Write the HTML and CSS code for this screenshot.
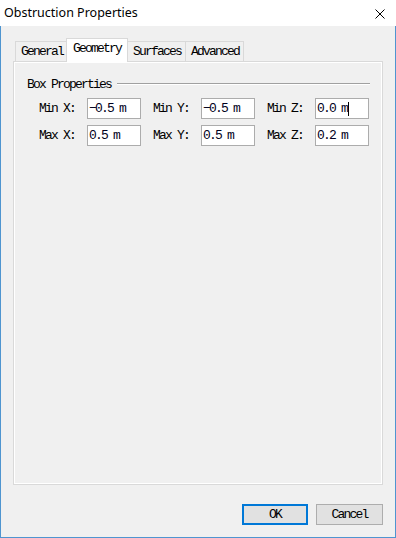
FILE: index.html
```html
<!DOCTYPE html>
<html>
<head>
<meta charset="utf-8">
<link rel="stylesheet" href="styles.css">
</head>
<body>
<div class="window">
  <div class="titlebar">
    <span class="title">Obstruction Properties</span>
    <svg class="close" width="10" height="10" viewBox="0 0 10 10"><path d="M0.5 0.5 L9.5 9.5 M9.5 0.5 L0.5 9.5" stroke="#000" stroke-width="1" fill="none"/></svg>
  </div>
  <div class="body">
    <div class="tabs">
      <div class="tab">General</div>
      <div class="tab selected">Geometry</div>
      <div class="tab">Surfaces</div>
      <div class="tab">Advanced</div>
    </div>
    <div class="panel">
      <div class="group-head">
        <span class="group-label">Box Properties</span>
        <span class="group-line"></span>
      </div>
      <div class="row">
        <span class="lbl">Min X:</span><span class="field">&minus;0.5 m</span>
        <span class="lbl">Min Y:</span><span class="field">&minus;0.5 m</span>
        <span class="lbl">Min Z:</span><span class="field">0.0 m<span class="caret"></span></span>
      </div>
      <div class="row">
        <span class="lbl">Max X:</span><span class="field">0.5 m</span>
        <span class="lbl">Max Y:</span><span class="field">0.5 m</span>
        <span class="lbl">Max Z:</span><span class="field">0.2 m</span>
      </div>
    </div>
    <div class="buttons">
      <div class="btn default">OK</div>
      <div class="btn">Cancel</div>
    </div>
  </div>
</div>
</body>
</html>
```
FILE: styles.css
```css
html, body {
  margin: 0;
  padding: 0;
  background: #f0f0f0;
}
.window {
  width: 396px;
  height: 538px;
  display: flex;
  flex-direction: column;
}
.titlebar {
  height: 26px;
  background: #fff;
  display: flex;
  align-items: center;
  justify-content: space-between;
  padding: 0 11px 0 4px;
  box-sizing: border-box;
}
.title {
  font-family: "Noto Sans", sans-serif;
  font-size: 12.5px;
  color: #000;
  line-height: 26px;
}
.close {
  display: block;
  margin-top: 1px;
}
.body {
  flex: 1;
  border: 1px solid #4f95d0;
  border-top: none;
  padding: 13px 12px 12px 12px;
  display: flex;
  flex-direction: column;
  font-family: "Liberation Mono", monospace;
  font-size: 13px;
  letter-spacing: -1.8px;
  color: #000;
}
.tabs {
  height: 22px;
  display: flex;
  align-items: flex-end;
  padding-left: 2px;
  position: relative;
  z-index: 1;
}
.tab {
  height: 19px;
  line-height: 19px;
  border: 1px solid #d9d9d9;
  border-bottom: none;
  padding: 0 4px 0 5px;
  margin-right: -1px;
  background: #f0f0f0;
}
.tab.selected {
  height: 23px;
  line-height: 20px;
  padding: 0 6px 0 6px;
  background: #fff;
  margin-bottom: -1px;
  margin-left: -1px;
  position: relative;
  z-index: 2;
}
.panel {
  height: 424px;
  box-sizing: border-box;
  border: 1px solid #d9d9d9;
  box-shadow: inset 1px 1px 0 #fff, inset -1px -1px 0 #fff;
  padding: 16px 12px 0 13px;
}
.group-head {
  display: flex;
  align-items: center;
  height: 14px;
  line-height: 14px;
}
.group-label {
  white-space: nowrap;
}
.group-line {
  flex: 1;
  margin-left: 6px;
  margin-top: -3px;
  border-top: 1px solid #a0a0a0;
  border-bottom: 1px solid #fff;
}
.row {
  display: flex;
  align-items: center;
  padding-left: 12px;
  margin-top: 6px;
}
.lbl {
  width: 48px;
  white-space: nowrap;
}
.field {
  width: 54px;
  height: 21px;
  box-sizing: border-box;
  border: 1px solid #acacac;
  background: #fff;
  padding-left: 1px;
  line-height: 19px;
  margin-right: 12px;
  white-space: nowrap;
  display: flex;
  align-items: center;
  color: #000020;
}
.field:last-child {
  margin-right: 0;
}
.caret {
  display: inline-block;
  width: 1px;
  height: 14px;
  background: #000;
  margin-left: 1px;
}
.buttons {
  margin-top: 19px;
  display: flex;
  justify-content: flex-end;
  gap: 8px;
}
.btn {
  width: 67px;
  height: 21px;
  box-sizing: border-box;
  border: 1px solid #adadad;
  background: #e1e1e1;
  text-align: center;
  line-height: 19px;
}
.btn.default {
  width: 66px;
  border: 2px solid #0078d7;
  line-height: 17px;
}
```
